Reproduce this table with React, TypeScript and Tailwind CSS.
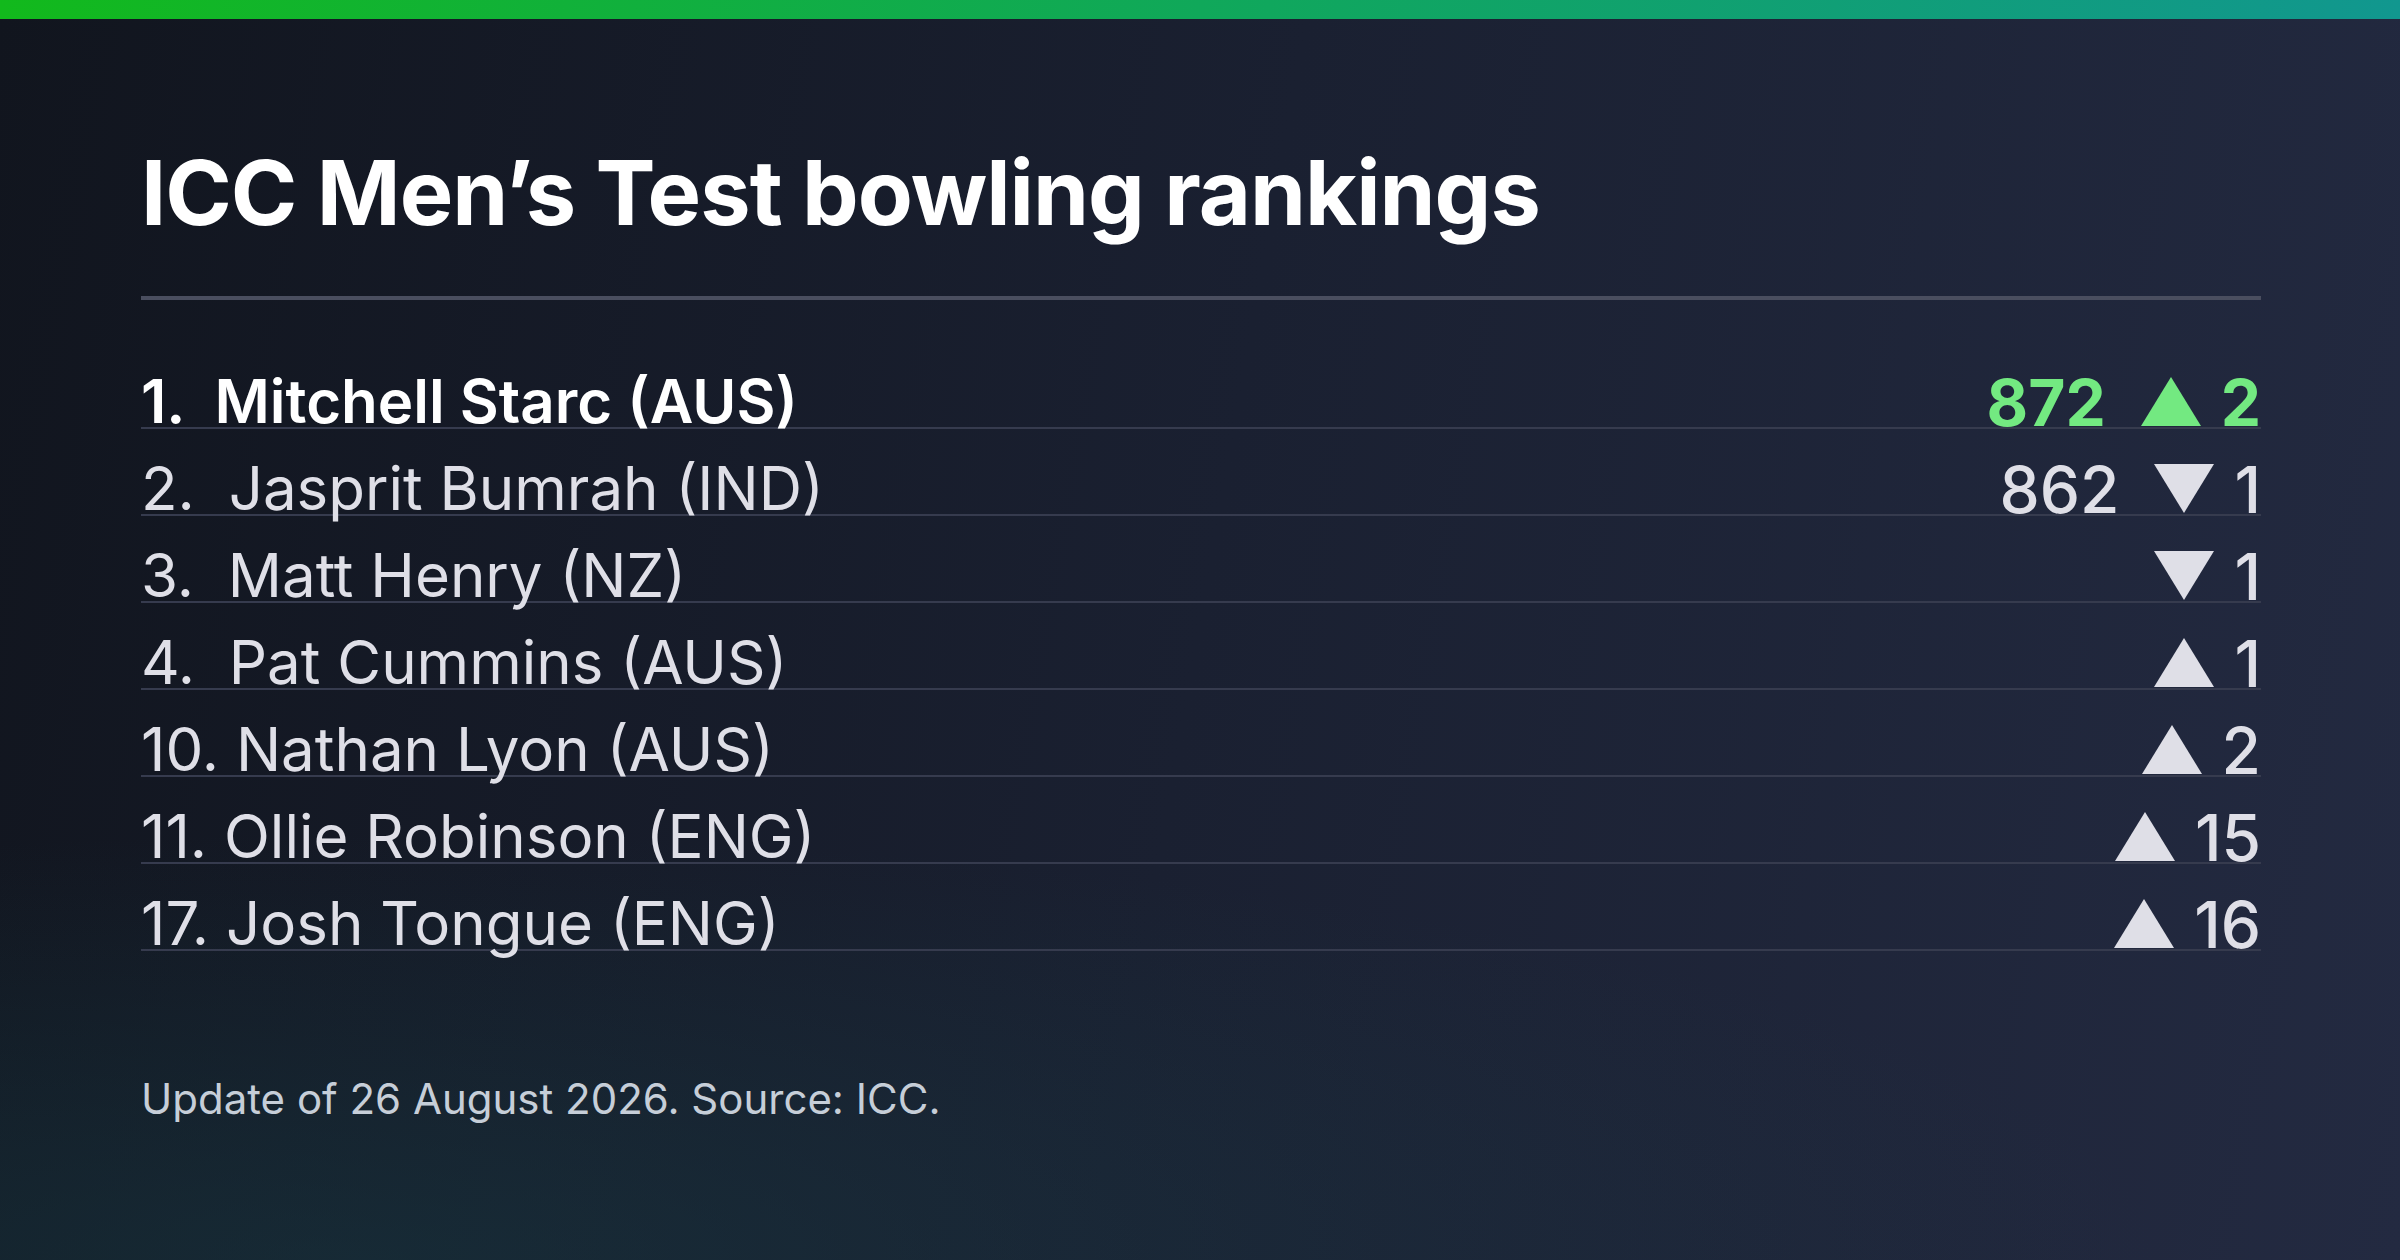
import React from "react";

interface Row {
  rank: string;
  name: string;
  score?: number;
  dir: "up" | "down";
  move: number;
  leader?: boolean;
}

const rows: Row[] = [
  { rank: "1.  ", name: "Mitchell Starc (AUS)", score: 872, dir: "up", move: 2, leader: true },
  { rank: "2.  ", name: "Jasprit Bumrah (IND)", score: 862, dir: "down", move: 1 },
  { rank: "3.  ", name: "Matt Henry (NZ)", dir: "down", move: 1 },
  { rank: "4.  ", name: "Pat Cummins (AUS)", dir: "up", move: 1 },
  { rank: "10. ", name: "Nathan Lyon (AUS)", dir: "up", move: 2 },
  { rank: "11. ", name: "Ollie Robinson (ENG)", dir: "up", move: 15 },
  { rank: "17. ", name: "Josh Tongue (ENG)", dir: "up", move: 16 },
];

function Triangle({ dir, className }: { dir: "up" | "down"; className: string }) {
  return (
    <svg viewBox="0 0 60 49" className={`w-[60px] h-[49px] shrink-0 ${className}`}>
      {dir === "up" ? <polygon points="30,0 60,49 0,49" /> : <polygon points="0,0 60,0 30,49" />}
    </svg>
  );
}

export default function App() {
  return (
    <div
      className="w-full h-[1260px] flex flex-col overflow-hidden bg-[radial-gradient(ellipse_100%_45%_at_15%_100%,rgba(24,58,68,0.5),transparent_75%),linear-gradient(100deg,#11151e_0%,#1a2031_50%,#232a41_100%)]"
      style={{ fontFamily: "Inter, 'Noto Sans', sans-serif" }}
    >
      {/* Accent bar */}
      <div className="h-[19px] w-full bg-[linear-gradient(to_right,#12b91c,#10a85a_50%,#11978f)]" />

      <div className="px-[141px] pr-[139px] flex flex-col">
        <h1 className="mt-[129px] text-[90px] leading-none font-bold tracking-[-0.011em] text-white">
          ICC Men’s Test bowling rankings
        </h1>

        <div className="mt-[58px] h-[4px] bg-[#4a4e5f]" />

        {/* Rankings */}
        <ul className="mt-[75px] flex flex-col gap-[33px]">
          {rows.map((r) => (
            <li
              key={r.rank}
              className="flex items-end justify-between border-b-2 border-[#363b4e]"
            >
              <span
                className={`whitespace-pre text-[60px] leading-[52px] ${
                  r.leader ? "font-semibold text-white" : "font-normal text-[#dfdfe7]"
                }`}
              >
                {r.rank}
                {r.name}
              </span>
              <span
                className={`flex items-baseline text-[64px] leading-[49px] ${
                  r.leader ? "font-bold text-[#73e981]" : "font-medium text-[#dfdfe7]"
                }`}
              >
                {r.score !== undefined && <span className="mr-[35px]">{r.score}</span>}
                <Triangle dir={r.dir} className={r.leader ? "fill-[#73e981]" : "fill-[#dfdfe7]"} />
                <span className="ml-[20px]">{r.move}</span>
              </span>
            </li>
          ))}
        </ul>

        <p className="mt-[127px] text-[42px] leading-none text-[#c6ced8]">
          Update of 26 August 2026. Source: ICC.
        </p>
      </div>
    </div>
  );
}
